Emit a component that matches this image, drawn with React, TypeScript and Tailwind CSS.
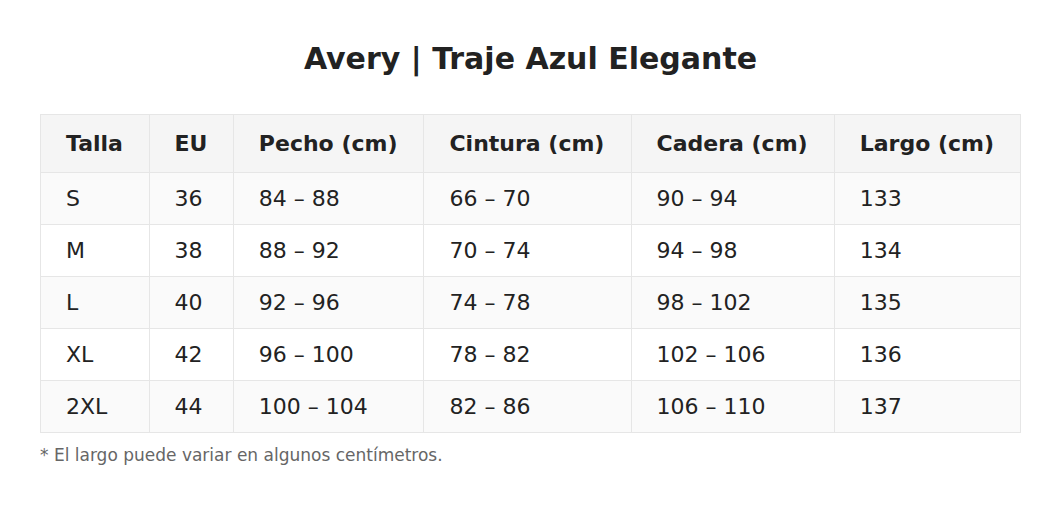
const headers = ['Talla', 'EU', 'Pecho (cm)', 'Cintura (cm)', 'Cadera (cm)', 'Largo (cm)'];

const rows = [
  ['S', '36', '84 – 88', '66 – 70', '90 – 94', '133'],
  ['M', '38', '88 – 92', '70 – 74', '94 – 98', '134'],
  ['L', '40', '92 – 96', '74 – 78', '98 – 102', '135'],
  ['XL', '42', '96 – 100', '78 – 82', '102 – 106', '136'],
  ['2XL', '44', '100 – 104', '82 – 86', '106 – 110', '137'],
];

export default function App() {
  return (
    <div className="min-h-[505px] bg-white px-10 pt-[40px] font-['DejaVu_Sans',sans-serif] text-[#222]">
      <h1 className="text-center text-[30px] font-bold leading-[38px]">Avery | Traje Azul Elegante</h1>

      <table className="mt-[36px] w-full border-collapse border border-[#e6e6e6] text-left whitespace-nowrap">
        <thead>
          <tr className="bg-[#f5f5f5]">
            {headers.map((h) => (
              <th key={h} className="h-[58px] border border-[#e6e6e6] px-[25px] text-[22px] font-bold">
                {h}
              </th>
            ))}
          </tr>
        </thead>
        <tbody>
          {rows.map((row, i) => (
            <tr key={row[0]} className={i % 2 === 0 ? 'bg-[#fafafa]' : 'bg-white'}>
              {row.map((cell, j) => (
                <td key={j} className="h-[52px] border border-[#e6e6e6] px-[25px] text-[22px]">
                  {cell}
                </td>
              ))}
            </tr>
          ))}
        </tbody>
      </table>

      <p className="mt-[10px] text-[17px] leading-[24px] text-[#666]">* El largo puede variar en algunos centímetros.</p>
    </div>
  );
}
